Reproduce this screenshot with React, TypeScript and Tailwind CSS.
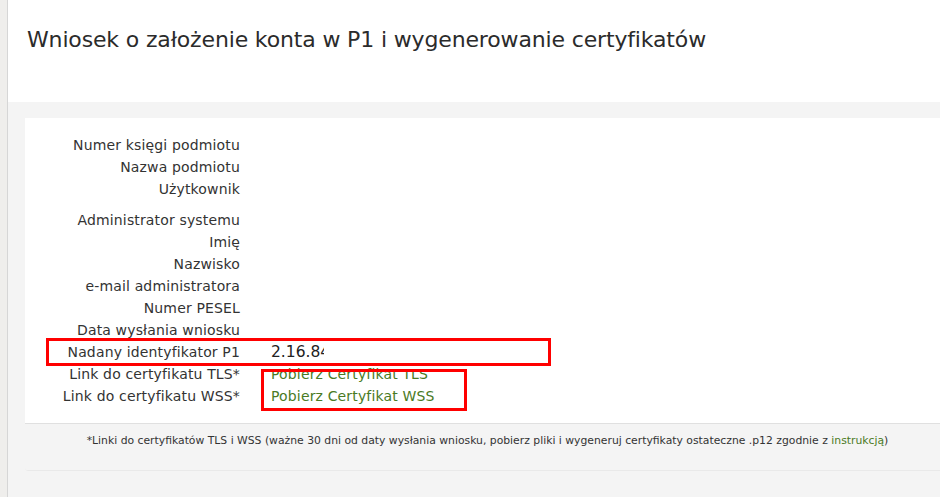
import React from "react";

const groupA = ["Numer księgi podmiotu", "Nazwa podmiotu", "Użytkownik"];
const groupB = [
  "Administrator systemu",
  "Imię",
  "Nazwisko",
  "e-mail administratora",
  "Numer PESEL",
  "Data wysłania wniosku",
];

function Row({ label, children }: { label: string; children?: React.ReactNode }) {
  return (
    <div className="grid grid-cols-[215px_1fr] gap-x-[31px] h-[22px] items-center">
      <div className="text-right whitespace-nowrap">{label}</div>
      <div className="whitespace-nowrap">{children}</div>
    </div>
  );
}

export default function App() {
  return (
    <div
      className="relative flex w-[940px] h-[497px] overflow-hidden bg-[#f4f4f4] text-[#333]"
      style={{ fontFamily: '"DejaVu Sans", Verdana, sans-serif' }}
    >
      <div className="w-[8px] shrink-0 bg-[#efeeec] border-r border-[#d6d6d6]" />
      <div className="flex-1 flex flex-col min-w-0">
        <header className="h-[102px] bg-white shrink-0 pl-[19px] pt-[25px]">
          <h1 className="text-[22px] leading-[30px] font-normal text-[#2b2b2b] tracking-[-0.15px] whitespace-nowrap">
            Wniosek o założenie konta w P1 i wygenerowanie certyfikatów
          </h1>
        </header>
        <div className="pt-[16px] pl-[17px]">
          <div className="bg-white rounded-bl-[3px]">
            <div className="pt-[16px] pb-[16px] text-[14px] tracking-[0.15px]">
              {groupA.map((l) => (
                <Row key={l} label={l} />
              ))}
              <div className="h-[9px]" />
              {groupB.map((l) => (
                <Row key={l} label={l} />
              ))}
              <Row label="Nadany identyfikator P1">
                <span className="inline-block w-[53px] overflow-hidden align-bottom text-[15.5px] leading-[22px] tracking-normal text-[#222]">
                  2.16.840.1.113
                </span>
              </Row>
              <Row label="Link do certyfikatu TLS*">
                <a className="text-[#4a7a24]">Pobierz Certyfikat TLS</a>
              </Row>
              <Row label="Link do certyfikatu WSS*">
                <a className="text-[#4a7a24]">Pobierz Certyfikat WSS</a>
              </Row>
            </div>
            <div className="h-[48px] bg-[#f4f4f4] border-t border-[#e0e0e0] border-b border-b-[#e9e9e9] rounded-bl-[3px] pt-[10px] text-center text-[10.8px] leading-[14px] text-[#333] whitespace-nowrap pl-[10px]">
              *Linki do certyfikatów TLS i WSS (ważne 30 dni od daty wysłania wniosku, pobierz pliki i wygeneruj certyfikaty ostateczne .p12 zgodnie z{" "}
              <a className="text-[#4a7a24]">instrukcją</a>)
            </div>
          </div>
        </div>
      </div>
      <div className="absolute left-[46px] top-[338px] w-[505px] h-[28px] border-[3px] border-[#ff0000]" />
      <div className="absolute left-[261px] top-[369px] w-[206px] h-[42px] border-[3px] border-[#ff0000]" />
    </div>
  );
}
